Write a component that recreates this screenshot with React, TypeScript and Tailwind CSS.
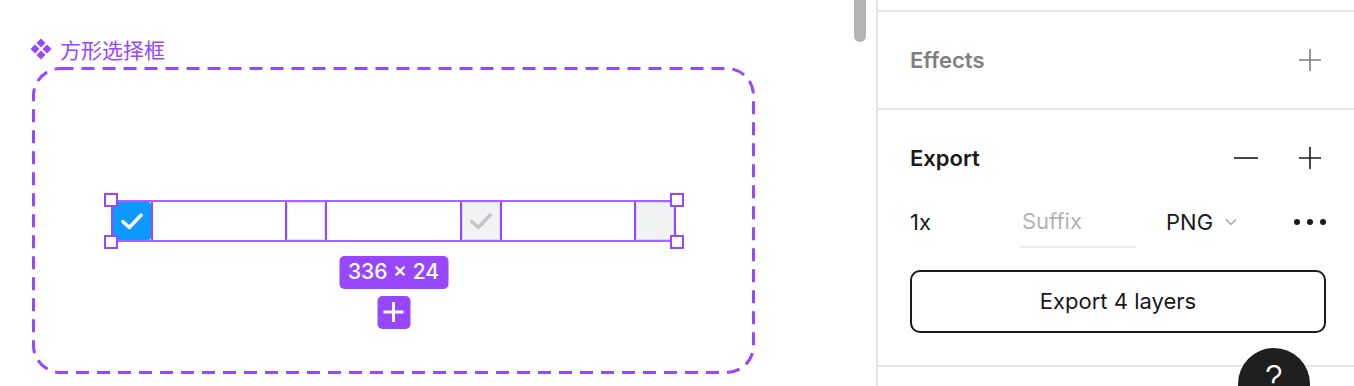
import React from 'react';

const PURPLE = '#9747ff';

const PlusIcon = ({ color = '#1a1a1a' }: { color?: string }) => (
    <svg width="24" height="24" viewBox="0 0 24 24" fill="none">
        <path d="M12 1V23M1 12H23" stroke={color} strokeWidth="1.6" />
    </svg>
);

const MinusIcon = () => (
    <svg width="24" height="24" viewBox="0 0 24 24" fill="none">
        <path d="M0 12H24" stroke="#1a1a1a" strokeWidth="1.6" />
    </svg>
);

const Check = ({ color }: { color: string }) => (
    <svg width="26" height="26" viewBox="0 0 24 24" fill="none">
        <path d="M3.5 12.5L9.5 18L20.5 6.5" stroke={color} strokeWidth="3.2" strokeLinecap="round" strokeLinejoin="round" />
    </svg>
);

// 4-diamond glyph for component sets
const ComponentSetIcon = () => (
    <svg width="22" height="22" viewBox="0 0 22 22" fill={PURPLE}>
        <path d="M11 0.5L15.5 5L11 9.5L6.5 5Z" />
        <path d="M5 6.5L9.5 11L5 15.5L0.5 11Z" />
        <path d="M17 6.5L21.5 11L17 15.5L12.5 11Z" />
        <path d="M11 12.5L15.5 17L11 21.5L6.5 17Z" />
    </svg>
);

const Handle = ({ pos }: { pos: string }) => (
    <div className={`absolute w-[14px] h-[14px] bg-white border-2 border-[#9747ff] z-10 ${pos}`} />
);

const Cell = ({ kind }: { kind: 'checked' | 'empty' | 'disabledChecked' | 'disabled' }) => (
    <div className="w-[42px] h-[42px] border-2 border-[#9747ff] flex">
        {kind === 'checked' && (
            <div className="flex-1 bg-[#0d99ff] rounded-[3px] flex items-center justify-center">
                <Check color="#ffffff" />
            </div>
        )}
        {kind === 'empty' && <div className="flex-1 bg-white border border-[#e3e3e3] rounded-[2px]" />}
        {kind === 'disabledChecked' && (
            <div className="flex-1 bg-[#f1f2f3] border border-[#dcdcdc] rounded-[2px] flex items-center justify-center">
                <Check color="#c6c6c6" />
            </div>
        )}
        {kind === 'disabled' && <div className="flex-1 bg-[#f1f2f3] border border-[#dcdcdc] rounded-[2px]" />}
    </div>
);

export default function App() {
    return (
        <div className="w-[1354px] h-[386px] flex bg-white overflow-hidden font-['Inter','Liberation_Sans',sans-serif] text-[#1a1a1a]">
            {/* Canvas */}
            <div className="relative w-[876px] h-full shrink-0">
                <div className="absolute left-[854px] -top-[8px] w-[12px] h-[50px] rounded-full bg-[#b3b3b3]" />

                <div className="pl-[30px] pt-[37px] h-[61px] flex items-center gap-[8px]">
                    <ComponentSetIcon />
                    <span className="text-[21px] leading-[24px] text-[#9747ff] font-['Noto_Sans_CJK_SC',sans-serif]">方形选择框</span>
                </div>

                <div className="relative ml-[32px] mt-[6px] w-[723px] h-[307px] flex items-center justify-center">
                    <svg className="absolute inset-0" width="723" height="307" viewBox="0 0 723 307" fill="none">
                        <rect x="1.5" y="1.5" width="720" height="304" rx="27" stroke={PURPLE} strokeWidth="3" strokeDasharray="13 8" />
                    </svg>

                    <div className="relative w-[566px] h-[42px] flex justify-between">
                        <div className="absolute inset-0 border-y-2 border-[#a862ff]" />
                        <Cell kind="checked" />
                        <Cell kind="empty" />
                        <Cell kind="disabledChecked" />
                        <Cell kind="disabled" />

                        <Handle pos="-left-[7px] -top-[7px]" />
                        <Handle pos="-left-[7px] -bottom-[7px]" />
                        <Handle pos="-right-[7px] -top-[7px]" />
                        <Handle pos="-right-[7px] -bottom-[7px]" />

                        <div className="absolute top-[56px] left-1/2 -translate-x-1/2 w-[109px] h-[33px] rounded-[5px] bg-[#9747ff] text-white text-[21px] font-medium flex items-center justify-center whitespace-nowrap">
                            336 × 24
                        </div>
                        <div className="absolute top-[96px] left-1/2 -translate-x-1/2 w-[33px] h-[33px] rounded-[5px] bg-[#9747ff] flex items-center justify-center">
                            <svg width="22" height="22" viewBox="0 0 22 22" fill="none">
                                <path d="M11 1V21M1 11H21" stroke="#ffffff" strokeWidth="3" />
                            </svg>
                        </div>
                    </div>
                </div>
            </div>

            <div className="w-[2px] h-full bg-[#e6e6e6] shrink-0" />

            {/* Properties panel */}
            <div className="relative flex-1 flex flex-col">
                <div className="h-[12px] border-b-2 border-[#e6e6e6]" />

                <div className="h-[98px] border-b-2 border-[#e6e6e6] pl-[32px] pr-[28px] flex items-center justify-between">
                    <span className="text-[22px] font-semibold text-[#7f7f7f]">Effects</span>
                    <div className="mr-[4px]"><PlusIcon color="#7d7d7d" /></div>
                </div>

                <div className="pt-[32px] pb-[32px] border-b-2 border-[#e6e6e6] pl-[32px] pr-[28px] flex flex-col">
                    <div className="h-[32px] flex items-center justify-between">
                        <span className="text-[22px] font-semibold">Export</span>
                        <div className="flex items-center gap-[40px] mr-[4px]">
                            <MinusIcon />
                            <PlusIcon />
                        </div>
                    </div>

                    <div className="mt-[26px] h-[48px] flex items-start text-[22px]">
                        <div className="w-[110px] h-[44px] flex items-center">1x</div>
                        <div className="w-[116px] h-[48px] pb-[4px] border-b-2 border-[#ebebeb] flex items-center pl-[2px] text-[#b3b3b3]">Suffix</div>
                        <div className="ml-[30px] h-[44px] flex items-center gap-[12px]">
                            <span>PNG</span>
                            <svg width="12" height="8" viewBox="0 0 12 8" fill="none">
                                <path d="M1 1.5L6 6.5L11 1.5" stroke="#9a9a9a" strokeWidth="1.2" />
                            </svg>
                        </div>
                        <div className="ml-auto h-[44px] flex items-center gap-[7px]">
                            <span className="w-[6px] h-[6px] rounded-full bg-[#1a1a1a]" />
                            <span className="w-[6px] h-[6px] rounded-full bg-[#1a1a1a]" />
                            <span className="w-[6px] h-[6px] rounded-full bg-[#1a1a1a]" />
                        </div>
                    </div>

                    <div className="mt-[22px] h-[63px] border-2 border-[#1a1a1a] rounded-[10px] flex items-center justify-center text-[22px]">
                        Export 4 layers
                    </div>
                </div>

                <div className="absolute left-[360px] top-[348px] w-[72px] h-[72px] rounded-full bg-[#1e1e1e] flex justify-center">
                    <span className="mt-[12px] text-white text-[36px] font-light leading-none">?</span>
                </div>
            </div>
        </div>
    );
}
